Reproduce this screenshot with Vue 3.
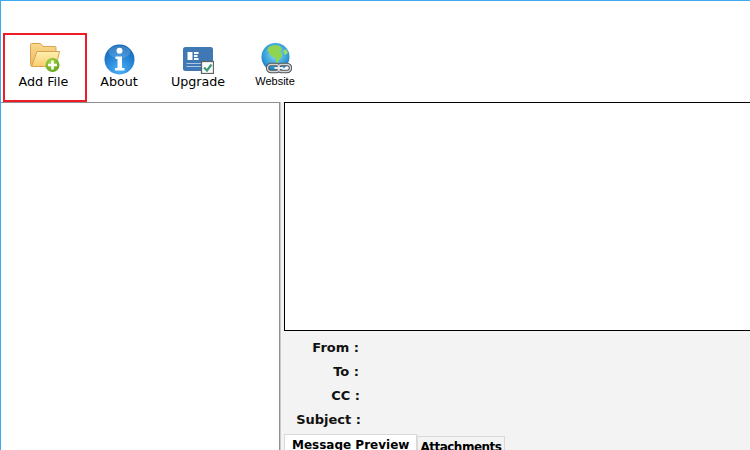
<script setup>
const fields = [
  { label: 'From :', cls: 'f-from' },
  { label: 'To :', cls: 'f-to' },
  { label: 'CC :', cls: 'f-cc' },
  { label: 'Subject :', cls: 'f-subject' }
]
</script>

<template>
  <div class="window">
    <div class="toolbar">
      <div class="tool tool-add">
        <svg width="32" height="30" viewBox="0 0 32 30">
          <defs>
            <linearGradient id="fb" x1="0" y1="0" x2="0" y2="1"><stop offset="0" stop-color="#f9d98e"/><stop offset="1" stop-color="#ecb860"/></linearGradient>
            <linearGradient id="ff" x1="0" y1="0" x2="0" y2="1"><stop offset="0" stop-color="#fff0b0"/><stop offset="1" stop-color="#f9cd6e"/></linearGradient>
            <radialGradient id="gp" cx=".4" cy=".3" r=".8"><stop offset="0" stop-color="#a6d64a"/><stop offset="1" stop-color="#5c9e13"/></radialGradient>
          </defs>
          <path d="M1.500 2.500a1 1 0 0 1 1-1h9l2.500 3h12a1 1 0 0 1 1 1V24H3a1.500 1.500 0 0 1-1.500-1.500z" fill="url(#fb)" stroke="#d9a352"/>
          <path d="M8 9.500h22.500L27 24.500H2.500z" fill="url(#ff)" stroke="#d9a352"/>
          <circle cx="23.500" cy="23" r="7" fill="url(#gp)"/>
          <path d="M23.500 18.500v9M19 23h9" stroke="#fff" stroke-width="2.600"/>
        </svg>
        <span class="tool-label">Add File</span>
      </div>
      <div class="tool tool-about">
        <svg width="31" height="31" viewBox="0 0 31 31">
          <defs>
            <radialGradient id="bl" cx=".5" cy=".85" r=".85"><stop offset="0" stop-color="#4fb2f5"/><stop offset=".6" stop-color="#2280d4"/><stop offset="1" stop-color="#1063b0"/></radialGradient>
          </defs>
          <circle cx="15.500" cy="15.500" r="15" fill="url(#bl)"/>
          <ellipse cx="15.500" cy="8" rx="11" ry="6.500" fill="#fff" opacity=".16"/>
          <circle cx="15.500" cy="6.800" r="3" fill="#fff"/>
          <path d="M11.500 12.500h6.500v11.500h2.500v2.500h-9.500V24h2.500v-9h-2z" fill="#fff"/>
        </svg>
        <span class="tool-label">About</span>
      </div>
      <div class="tool tool-upgrade">
        <svg width="32" height="27" viewBox="0 0 32 27">
          <rect x="1" y="0" width="30" height="24" rx="2.500" fill="#3f78b5"/>
          <rect x="5.500" y="5" width="5" height="8" fill="#fff"/>
          <path d="M12 5h4.500v2H12zM12 8h3.500v2H12zM12 11h4.500v2H12z" fill="#fff"/>
          <path d="M4.500 16.500h23M4.500 19.500h15" stroke="#a9c8e6" stroke-width="1.200"/>
          <rect x="19.500" y="14.500" width="12" height="12" fill="#fff" stroke="#5e6468" stroke-width="1.300"/>
          <path d="M22 20.500l3 3 4.500-6" fill="none" stroke="#3f9a78" stroke-width="2.200"/>
        </svg>
        <span class="tool-label">Upgrade</span>
      </div>
      <div class="tool tool-web">
        <svg width="31" height="31" viewBox="0 0 31 31">
          <defs>
            <radialGradient id="gl" cx=".5" cy=".4" r=".65"><stop offset="0" stop-color="#8adcf5"/><stop offset=".7" stop-color="#2f9ad6"/><stop offset="1" stop-color="#1368ab"/></radialGradient>
          </defs>
          <circle cx="14.500" cy="14" r="14" fill="url(#gl)"/>
          <path d="M8 3.500l6-1.500 5 1 2 3-2 3 2.500 2-1.500 4-3 3 .5 3-2.500-2-.5-4-4-1.500-2.500-4-2-2z" fill="#8fd552"/>
          <path d="M22 8l3-2 2 4-3 2z" fill="#9ade62"/>
          <rect x="6.500" y="21.500" width="12" height="7" rx="3.500" fill="none" stroke="#4f5357" stroke-width="3.400"/>
          <rect x="17" y="21.500" width="12.500" height="7" rx="3.500" fill="none" stroke="#4f5357" stroke-width="3.400"/>
          <rect x="6.500" y="21.500" width="12" height="7" rx="3.500" fill="none" stroke="#d2d5d8" stroke-width="1.500"/>
          <rect x="17" y="21.500" width="12.500" height="7" rx="3.500" fill="none" stroke="#d2d5d8" stroke-width="1.500"/>
          <path d="M13.500 25h9" stroke="#eceeef" stroke-width="2"/>
        </svg>
        <span class="web-label">Website</span>
      </div>
    </div>
    <div class="body">
      <div class="tree"></div>
      <div class="main">
        <div class="preview"></div>
        <div class="fields">
          <div v-for="f in fields" :key="f.label" class="field" :class="f.cls">{{ f.label }}</div>
        </div>
        <div class="tabs">
          <div class="tab tab-active">Message Preview</div>
          <div class="tab tab-other">Attachments</div>
        </div>
      </div>
    </div>
  </div>
</template>

<style>
html, body { margin: 0; padding: 0; overflow: hidden; background: #fff; }
</style>

<style scoped>
.window {
  width: 750px;
  height: 450px;
  box-sizing: border-box;
  border-top: 1px solid #3ea9ee;
  border-left: 1px solid #3ea9ee;
  background: #fff;
  display: flex;
  flex-direction: column;
  overflow: hidden;
  font-family: "DejaVu Sans", Verdana, sans-serif;
  color: #000;
}
.toolbar {
  height: 101px;
  flex: none;
  box-sizing: border-box;
  padding: 32px 0 0 2px;
  display: flex;
  align-items: stretch;
}
.tool {
  display: flex;
  flex-direction: column;
  align-items: center;
  box-sizing: border-box;
  font-size: 12.700px;
  line-height: 15px;
}
.tool-add {
  width: 84px;
  height: 69px;
  border: 2px solid #ee1c25;
  padding-top: 7px;
}
.tool-add .tool-label { margin: 2px 3px 0 0; }
.tool-about { width: 64px; padding-top: 11px; }
.tool-about svg { margin-bottom: -1px; }
.tool-upgrade { width: 80px; padding-top: 14px; margin-left: 7px; }
.tool-web { width: 58px; padding-top: 10px; margin-left: 8px; }
.tool-web svg { margin-left: 3px; }
.web-label {
  font-family: "Liberation Sans", Arial, sans-serif;
  font-size: 11px;
  line-height: 12px;
  margin-top: 1px;
}
.body { flex: 1; display: flex; min-height: 0; }
.tree {
  width: 278px;
  flex: none;
  box-sizing: content-box;
  border-top: 1px solid #8e8f94;
  border-right: 1px solid #8e8f94;
  background: #fff;
}
.main {
  flex: 1;
  min-width: 0;
  border-left: 1px solid #c9c9c9;
  background: #f3f3f3;
  padding: 0 0 0 3px;
  overflow: hidden;
}
.preview {
  height: 227px;
  width: 500px;
  border: 1px solid #000;
  background: #fff;
}
.fields { height: 98px; padding-top: 5px; box-sizing: content-box; }
.field {
  height: 24px;
  line-height: 24px;
  font-size: 13px;
  font-weight: 700;
  color: #111;
  width: 75px;
  text-align: right;
}
.f-subject { width: 77px; }
.f-cc { width: 76px; }
.tabs { display: flex; align-items: flex-start; height: 24px; }
.tab {
  box-sizing: border-box;
  font-weight: 700;
  border: 1px solid #d9d9d9;
  border-bottom: none;
}
.tab-active {
  height: 24px;
  background: #fff;
  padding: 0 7px;
  font-size: 12px;
  line-height: 21px;
}
.tab-other {
  margin-top: 2px;
  height: 22px;
  padding: 0 3px 0 2px;
  font-size: 12px;
  letter-spacing: -0.500px;
  line-height: 20px;
}
</style>
